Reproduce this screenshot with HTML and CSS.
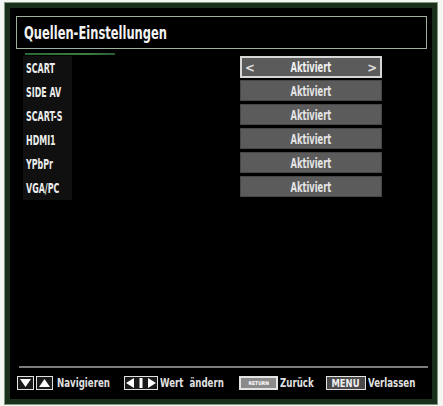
FILE: index.html
```html
<!DOCTYPE html>
<html>
<head>
<meta charset="utf-8">
<link rel="stylesheet" href="styles.css">
</head>
<body>
<div class="frame">
  <div class="title-box"><span class="title">Quellen-Einstellungen</span></div>
  <div class="green-bar"></div>
  <div class="rows">
    <div class="label"><span>SCART</span></div>
    <div class="value selected"><span class="chev">&lt;</span><span class="txt">Aktiviert</span><span class="chev">&gt;</span></div>
    <div class="label"><span>SIDE AV</span></div>
    <div class="value"><span class="txt">Aktiviert</span></div>
    <div class="label"><span>SCART-S</span></div>
    <div class="value"><span class="txt">Aktiviert</span></div>
    <div class="label"><span>HDMI1</span></div>
    <div class="value"><span class="txt">Aktiviert</span></div>
    <div class="label"><span>YPbPr</span></div>
    <div class="value"><span class="txt">Aktiviert</span></div>
    <div class="label"><span>VGA/PC</span></div>
    <div class="value"><span class="txt">Aktiviert</span></div>
  </div>
  <div class="spacer"></div>
  <div class="footer-line"></div>
  <div class="footer">
    <div class="item item-nav">
      <span class="key key-sq"><svg width="11" height="8" viewBox="0 0 11 8"><polygon points="0,0 11,0 5.5,8" fill="#fff"/></svg></span>
      <span class="key key-sq"><svg width="11" height="8" viewBox="0 0 11 8"><polygon points="0,8 11,8 5.5,0" fill="#fff"/></svg></span>
      <span class="ftxt">Navigieren</span>
    </div>
    <div class="item item-val">
      <span class="key key-lr"><svg width="32" height="10" viewBox="0 0 32 10"><polygon points="9,0 9,10 1,5" fill="#fff"/><rect x="14.5" y="0" width="3" height="10" fill="#fff"/><polygon points="23,0 23,10 31,5" fill="#fff"/></svg></span>
      <span class="ftxt">Wert&nbsp; ändern</span>
    </div>
    <div class="item item-back">
      <span class="key key-ret"><span class="ret-txt">RETURN</span></span>
      <span class="ftxt">Zurück</span>
    </div>
    <div class="item item-menu">
      <span class="key key-menu"><span class="menu-txt">MENU</span></span>
      <span class="ftxt">Verlassen</span>
    </div>
  </div>
</div>
</body>
</html>
```

FILE: styles.css
```css
html, body {
  margin: 0;
  padding: 0;
  background: #f4f6f4;
  width: 443px;
  height: 406px;
  overflow: hidden;
  font-family: "DejaVu Sans Condensed", "DejaVu Sans", sans-serif;
}

.frame {
  box-sizing: border-box;
  margin: 3px 0 0 5px;
  width: 432px;
  height: 401px;
  background: #000;
  border: 5px solid #1a301d;
  box-shadow: 0 0 0 1px #7d9a7d;
  display: flex;
  flex-direction: column;
  padding: 8px 5px 0 6px;
}

.title-box {
  height: 33px;
  box-sizing: border-box;
  border: 1px solid #9fb09f;
  display: flex;
  align-items: center;
  padding-left: 7px;
}

.title {
  display: inline-block;
  color: #f2f2f2;
  font-size: 18px;
  font-weight: bold;
  transform: scaleX(0.71);
  transform-origin: left center;
  white-space: nowrap;
}

.green-bar {
  margin: 4px 0 0 9px;
  width: 90px;
  height: 2px;
  background: linear-gradient(90deg, #2c6a34, #3d7d42 70%, #2a5a2e);
}

.rows {
  margin-top: 1px;
  display: grid;
  grid-template-columns: 49px 142px;
  grid-auto-rows: 24px;
  column-gap: 168px;
  margin-left: 7px;
}

.label {
  background: #101010;
  color: #ececec;
  font-size: 14px;
  font-weight: bold;
  padding: 4px 0 0 3px;
  box-sizing: border-box;
  white-space: nowrap;
}

.label span {
  display: inline-block;
  transform: scaleX(0.63);
  transform-origin: left center;
}

.value {
  height: 21px;
  box-sizing: border-box;
  background: #5b5b5b;
  border: 1px solid #474747;
  display: flex;
  align-items: center;
  justify-content: center;
  color: #e4e4e4;
  font-size: 14px;
  font-weight: bold;
}

.value .txt {
  display: inline-block;
  transform: scaleX(0.66);
  white-space: nowrap;
}

.value.selected {
  height: 22px;
  border: 2px solid #d6d6d6;
  justify-content: space-between;
  padding: 0 3px;
  color: #f0f0f0;
}

.chev {
  font-size: 13px;
  font-weight: bold;
  color: #e0e0e0;
}

.spacer {
  flex: 1;
}

.footer-line {
  height: 2px;
  background: #7c7c7c;
  margin: 0 -1px 0 3px;
}

.footer {
  height: 30px;
  display: flex;
  align-items: center;
  padding-left: 1px;
  padding-bottom: 1px;
  color: #e0e0e0;
}

.item {
  display: flex;
  align-items: center;
}

.item-nav { width: 108px; }
.item-val { width: 115px; }
.item-back { width: 87px; }

.key {
  box-sizing: border-box;
  height: 14px;
  border: 1.5px solid #e2e2e2;
  background: #1a1a1a;
  display: inline-flex;
  align-items: center;
  justify-content: center;
}

.key-sq {
  width: 17px;
  margin-right: 2px;
}

.key-lr {
  width: 39px;
}

.key-ret {
  width: 39px;
  background: #8a8a8a;
  border-width: 2px;
}

.ret-txt {
  font-size: 5px;
  font-weight: bold;
  color: #fff;
}

.key-menu {
  width: 40px;
  background: #4a4a4a;
}

.menu-txt {
  display: inline-block;
  font-size: 11px;
  font-weight: bold;
  color: #f0f0f0;
  transform: scaleX(0.85);
}

.ftxt {
  display: inline-block;
  font-size: 12px;
  font-weight: bold;
  margin-left: 2px;
  white-space: nowrap;
  transform: scaleX(0.8);
  transform-origin: left center;
}
```
